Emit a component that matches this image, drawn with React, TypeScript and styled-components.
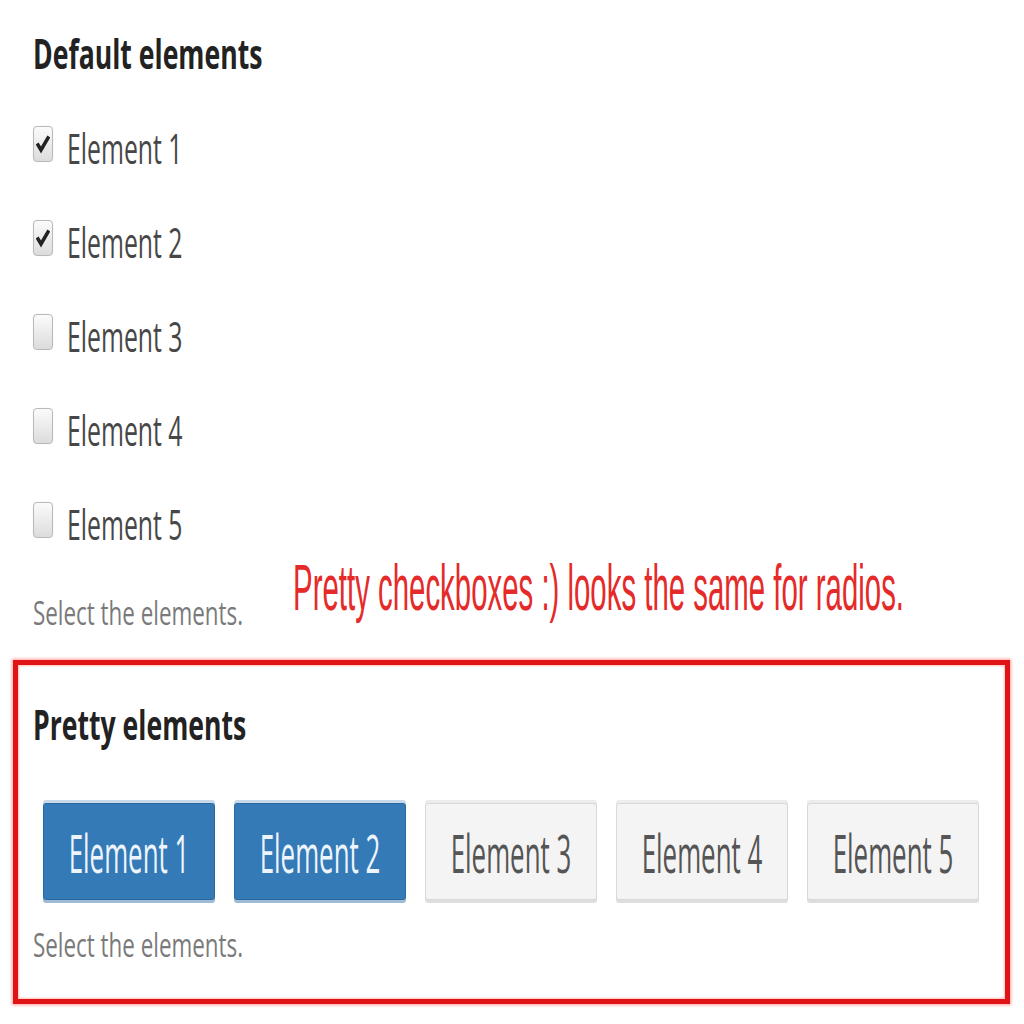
import React from "react";
import styled, { createGlobalStyle } from "styled-components";

const Global = createGlobalStyle`
  html, body { margin: 0; padding: 0; background: #ffffff; overflow: hidden; }
  body { font-family: "Open Sans", "Liberation Sans", sans-serif; color: #333; }
`;

const Page = styled.div`
  width: 1024px;
  height: 1024px;
  display: flex;
  flex-direction: column;
`;

/* The screenshot is stretched vertically: glyphs are tall and narrow. */
const Tall = styled.span<{ $sy: number }>`
  display: inline-block;
  white-space: nowrap;
  transform: scaleY(${(p) => p.$sy});
  transform-origin: center center;
`;

const Section = styled.div`
  padding-left: 33px;
  display: flex;
  flex-direction: column;
`;

const Title = styled.div`
  font-family: "Open Sans", sans-serif;
  font-weight: 700;
  font-size: 26.6px;
  line-height: 50px;
  height: 50px;
  color: #222;
`;

const CheckList = styled.div`
  display: flex;
  flex-direction: column;
  gap: 44px;
  margin-top: 43px;
`;

const CheckRow = styled.label`
  display: flex;
  align-items: center;
  gap: 14px;
  height: 50px;
`;

const Box = styled.span`
  width: 18px;
  height: 34px;
  margin-top: -6px;
  flex: none;
  border: 1px solid #b9b9b9;
  border-radius: 4px;
  background: linear-gradient(#fbfbfb, #dcdcdc);
  display: flex;
  align-items: center;
  justify-content: center;
  box-shadow: 0 0 1px rgba(0, 0, 0, 0.15);
`;

const Label = styled.span`
  font-size: 24.8px;
  line-height: 50px;
  color: #474747;
`;

const HelpRow = styled.div`
  display: flex;
  align-items: flex-start;
  gap: 50px;
  margin-top: 5px;
  height: 80px;
`;

const Help = styled.div<{ $top: number }>`
  font-size: 22.4px;
  line-height: 40px;
  color: #7a7a7a;
  margin-top: ${(p) => p.$top}px;
`;

const Note = styled.div`
  font-family: "Liberation Sans", Arial, sans-serif;
  font-size: 29.4px;
  line-height: 70px;
  color: #e52a2a;
`;

const Frame = styled.div`
  box-sizing: border-box;
  margin: 27px 0 0 13px;
  width: 997px;
  height: 344px;
  border: 5px solid #e01414;
  box-shadow: 0 0 3px 1px rgba(255, 80, 80, 0.55), inset 0 0 2px 1px rgba(255, 110, 110, 0.45);
  padding: 34px 0 0 15px;
  display: flex;
  flex-direction: column;
`;

const BtnRow = styled.div`
  display: flex;
  gap: 19px;
  margin: 54px 0 0 10px;
`;

const Btn = styled.div<{ $on?: boolean }>`
  width: 172px;
  height: 97px;
  box-sizing: border-box;
  border-radius: 3px;
  display: flex;
  align-items: center;
  justify-content: center;
  font-size: 25.9px;
  line-height: 60px;
  color: ${(p) => (p.$on ? "#eef4fb" : "#555")};
  background: ${(p) => (p.$on ? "#337ab7" : "#f4f4f4")};
  border: 1px solid ${(p) => (p.$on ? "#2a69a0" : "#d8d8d8")};
  box-shadow: ${(p) =>
    p.$on
      ? "0 -3px 0 0 #c8daea, 0 3px 0 0 #9fbad4"
      : "0 -3px 0 0 #ececec, 0 3px 0 0 #dedede"};
`;

const Check = () => (
  <svg width="14" height="22" viewBox="0 0 14 22">
    <path d="M2 12 L5 17 L12 5" fill="none" stroke="#222" strokeWidth="3.5" strokeLinecap="square" />
  </svg>
);

const items = [1, 2, 3, 4, 5];

export default function App() {
  return (
    <Page>
      <Global />
      <Section>
        <Title style={{ marginTop: 29 }}>
          <Tall $sy={1.54}>Default elements</Tall>
        </Title>
        <CheckList>
          {items.map((n) => (
            <CheckRow key={n}>
              <Box>{n <= 2 && <Check />}</Box>
              <Label>
                <Tall $sy={1.69}>Element {n}</Tall>
              </Label>
            </CheckRow>
          ))}
        </CheckList>
        <HelpRow>
          <Help $top={40}>
            <Tall $sy={1.47}>Select the elements.</Tall>
          </Help>
          <Note>
            <Tall $sy={2.18}>Pretty checkboxes :) looks the same for radios.</Tall>
          </Note>
        </HelpRow>
      </Section>
      <Frame>
        <Title>
          <Tall $sy={1.56}>Pretty elements</Tall>
        </Title>
        <BtnRow>
          {items.map((n) => (
            <Btn key={n} $on={n <= 2}>
              <Tall $sy={2.08}>Element {n}</Tall>
            </Btn>
          ))}
        </BtnRow>
        <Help $top={25}>
          <Tall $sy={1.47}>Select the elements.</Tall>
        </Help>
      </Frame>
    </Page>
  );
}
